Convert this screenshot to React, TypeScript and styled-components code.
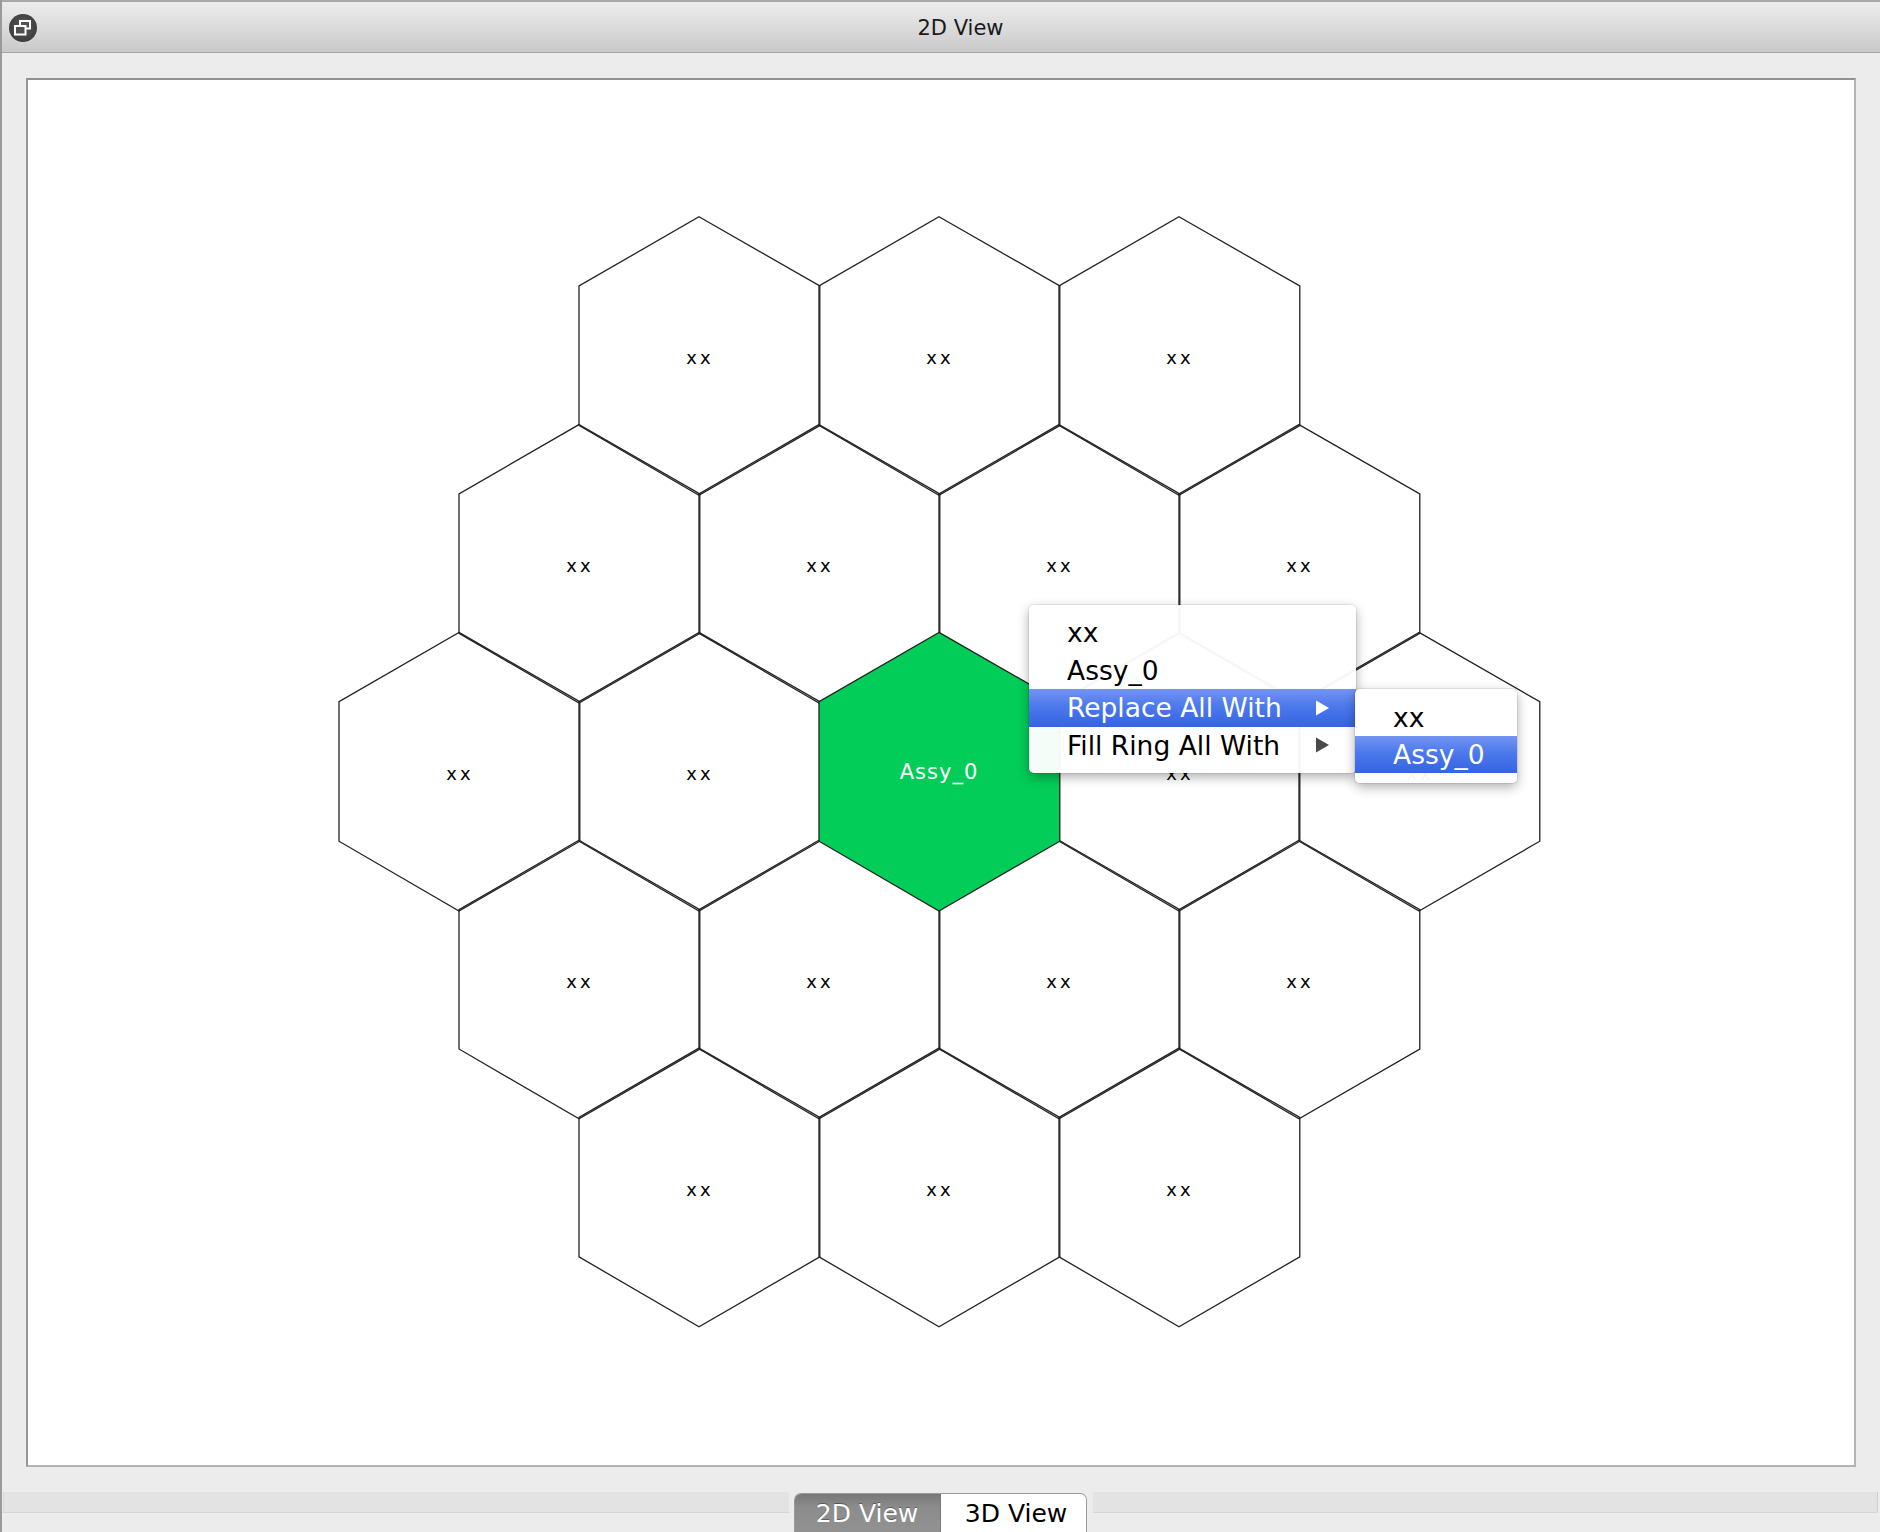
import React from "react";
import styled, { createGlobalStyle } from "styled-components";

const GlobalStyle = createGlobalStyle`
  html, body {
    margin: 0;
    padding: 0;
    height: 100%;
    overflow: hidden;
    background: #ececec;
    font-family: "DejaVu Sans", "Liberation Sans", sans-serif;
  }
  #root { height: 100%; }
`;

const Window = styled.div`
  height: 1532px;
  display: flex;
  flex-direction: column;
  border-left: 2px solid #9a9a9a;
  background: #ececec;
  overflow: hidden;
`;

const TitleBar = styled.div`
  height: 50px;
  flex: none;
  display: grid;
  grid-template-columns: 1fr auto 1fr;
  align-items: center;
  border-top: 2px solid #a9a9a9;
  border-bottom: 1px solid #a6a6a6;
  background: linear-gradient(to bottom, #ececec 0%, #dcdcdc 50%, #c9c9c9 100%);
`;

const TitleText = styled.div`
  font-size: 21px;
  color: #1a1a1a;
  line-height: 24px;
  padding-top: 2px;
  margin-left: 39px;
`;

const IconSlot = styled.div`
  display: flex;
  align-items: center;
  padding-left: 6px;
  padding-top: 1px;
`;

const Content = styled.div`
  flex: none;
  padding: 25px 24px 0 24px;
`;

const Canvas = styled.div`
  position: relative;
  height: 1389px;
  box-sizing: border-box;
  background: #ffffff;
  border-style: solid;
  border-width: 2px;
  border-color: #919191 #b2b2b2 #b2b2b2 #999999;
`;

const HexSvg = styled.svg`
  display: block;
`;

const Menu = styled.div<{ $left: number; $top: number; $width: number; $pad: number }>`
  position: absolute;
  left: ${(p) => p.$left}px;
  top: ${(p) => p.$top}px;
  width: ${(p) => p.$width}px;
  padding: ${(p) => p.$pad}px 0;
  background: rgba(255, 255, 255, 0.96);
  border-radius: 5px;
  box-shadow: 0 4px 12px rgba(0, 0, 0, 0.32), 0 0 0 1px rgba(0, 0, 0, 0.07);
  font-family: "DejaVu Sans", "Liberation Sans", sans-serif;
  font-size: 26.5px;
  color: #000;
`;

const MenuItem = styled.div<{ $active?: boolean; $h: number }>`
  height: ${(p) => p.$h}px;
  display: flex;
  align-items: center;
  justify-content: space-between;
  padding: 0 26px 0 38px;
  white-space: nowrap;
  color: ${(p) => (p.$active ? "#ffffff" : "#000000")};
  background: ${(p) =>
    p.$active
      ? "linear-gradient(to bottom, #7494f3 0%, #4c79ec 45%, #3563e4 100%)"
      : "transparent"};
`;

const Footer = styled.div`
  flex: none;
  display: flex;
  align-items: flex-start;
  padding-top: 25px;
`;

const Strip = styled.div<{ $side: "left" | "right" }>`
  flex: 1;
  height: 20px;
  background: #e3e3e3;
  border-bottom: 1px solid #d5d5d5;
  ${(p) =>
    p.$side === "left"
      ? "border-left: 1px solid #d6d6d6; margin-left: 1px;"
      : "border-right: 1px solid #cfcfcf; border-radius: 0 0 3px 0; margin-right: 2px;"}
`;

const TabGroup = styled.div`
  display: flex;
  margin: 1px 6px 0 5px;
  height: 45px;
  border: 1px solid #9a9a9a;
  border-bottom: none;
  border-radius: 7px 7px 0 0;
  overflow: hidden;
`;

const Tab = styled.div<{ $selected?: boolean }>`
  width: ${(p) => (p.$selected ? 146 : 145)}px;
  box-sizing: border-box;
  display: flex;
  justify-content: center;
  padding-top: 5px;
  font-size: 25px;
  line-height: 30px;
  color: ${(p) => (p.$selected ? "#ffffff" : "#000000")};
  text-shadow: ${(p) => (p.$selected ? "0 -1px 0 rgba(0,0,0,0.35)" : "none")};
  background: ${(p) =>
    p.$selected
      ? "linear-gradient(to bottom, #777777 0%, #8c8c8c 30%, #939393 100%)"
      : "#ffffff"};
  border-right: ${(p) => (p.$selected ? "1px solid #7a7a7a" : "none")};
  padding-left: ${(p) => (p.$selected ? "0" : "6px")};
`;

const WindowIcon = () => (
  <svg width="30" height="30" viewBox="0 0 30 30">
    <defs>
      <radialGradient id="ig" cx="50%" cy="45%" r="55%">
        <stop offset="0%" stopColor="#5a5a5a" />
        <stop offset="100%" stopColor="#3c3c3c" />
      </radialGradient>
    </defs>
    <circle cx="15" cy="15" r="14" fill="url(#ig)" />
    <rect x="12" y="8" width="10" height="7.5" fill="none" stroke="#ffffff" strokeWidth="2" />
    <rect x="7" y="13" width="10.5" height="8.5" fill="#505050" stroke="#ffffff" strokeWidth="2" />
  </svg>
);

const Arrow = ({ color }: { color: string }) => (
  <svg width="15" height="16" viewBox="0 0 15 16">
    <polygon points="1,0.5 14,8 1,15.5" fill={color} />
  </svg>
);

const W = 240;
const R = W / Math.sqrt(3);
const RS = 1.5 * R;
const CX = 939;
const CY = 771;

type Cell = { q: number; r: number; x: number; y: number; label: string; green: boolean };

const cells: Cell[] = [];
for (let r = -2; r <= 2; r++) {
  for (let q = Math.max(-2, -2 - r); q <= Math.min(2, 2 - r); q++) {
    const green = q === 0 && r === 0;
    cells.push({
      q,
      r,
      x: CX + W * (q + r / 2),
      y: CY + RS * r,
      label: green ? "Assy_0" : "xx",
      green,
    });
  }
}

// bottom and right vertices slightly pushed out, so that shared edges read thicker
const hexPoints = (x: number, y: number) =>
  [
    [x, y - R],
    [x + W / 2 + 0.8, y - R / 2],
    [x + W / 2 + 0.8, y + R / 2 + 0.9],
    [x, y + R + 1.4],
    [x - W / 2, y + R / 2 + 0.9],
    [x - W / 2, y - R / 2],
  ]
    .map(([a, b]) => `${a.toFixed(1)},${b.toFixed(1)}`)
    .join(" ");

const HexGrid = () => (
  <HexSvg width="1826" height="1385" viewBox="28 80 1826 1385">
    {cells
      .slice()
      .sort((a, b) => Number(a.green) - Number(b.green))
      .map((c) => (
        <g key={`${c.q}_${c.r}`}>
          <polygon
            points={hexPoints(c.x, c.y)}
            fill={c.green ? "#02cd58" : "#ffffff"}
            fillOpacity={c.green ? 1 : 0}
            stroke="#222222"
            strokeWidth={1.3}
            strokeLinejoin="miter"
          />
          {c.green ? (
            <text
              x={c.x}
              y={c.y + 8}
              textAnchor="middle"
              fontFamily="DejaVu Sans, sans-serif"
              fontSize="21"
              letterSpacing="1"
              fill="#ffffff"
            >
              {c.label}
            </text>
          ) : (
            <text
              x={c.x + 1}
              y={c.y + 9}
              textAnchor="middle"
              fontFamily="DejaVu Sans, sans-serif"
              fontSize="18"
              letterSpacing="3"
              fill="#000000"
            >
              {c.label}
            </text>
          )}
        </g>
      ))}
  </HexSvg>
);

export default function App() {
  return (
    <>
      <GlobalStyle />
      <Window>
        <TitleBar>
          <IconSlot>
            <WindowIcon />
          </IconSlot>
          <TitleText>2D View</TitleText>
          <div />
        </TitleBar>
        <Content>
          <Canvas>
            <HexGrid />
            <Menu $left={1001} $top={525} $width={327} $pad={9}>
              <MenuItem $h={37.5}>xx</MenuItem>
              <MenuItem $h={37.5}>Assy_0</MenuItem>
              <MenuItem $h={37.5} $active>
                <span>Replace All With</span>
                <Arrow color="#ffffff" />
              </MenuItem>
              <MenuItem $h={37.5}>
                <span>Fill Ring All With</span>
                <Arrow color="#4a4a4a" />
              </MenuItem>
            </Menu>
            <Menu $left={1327} $top={609} $width={162} $pad={10}>
              <MenuItem $h={37}>xx</MenuItem>
              <MenuItem $h={37} $active>
                Assy_0
              </MenuItem>
            </Menu>
          </Canvas>
        </Content>
        <Footer>
          <Strip $side="left" />
          <TabGroup>
            <Tab $selected>2D View</Tab>
            <Tab>3D View</Tab>
          </TabGroup>
          <Strip $side="right" />
        </Footer>
      </Window>
    </>
  );
}
